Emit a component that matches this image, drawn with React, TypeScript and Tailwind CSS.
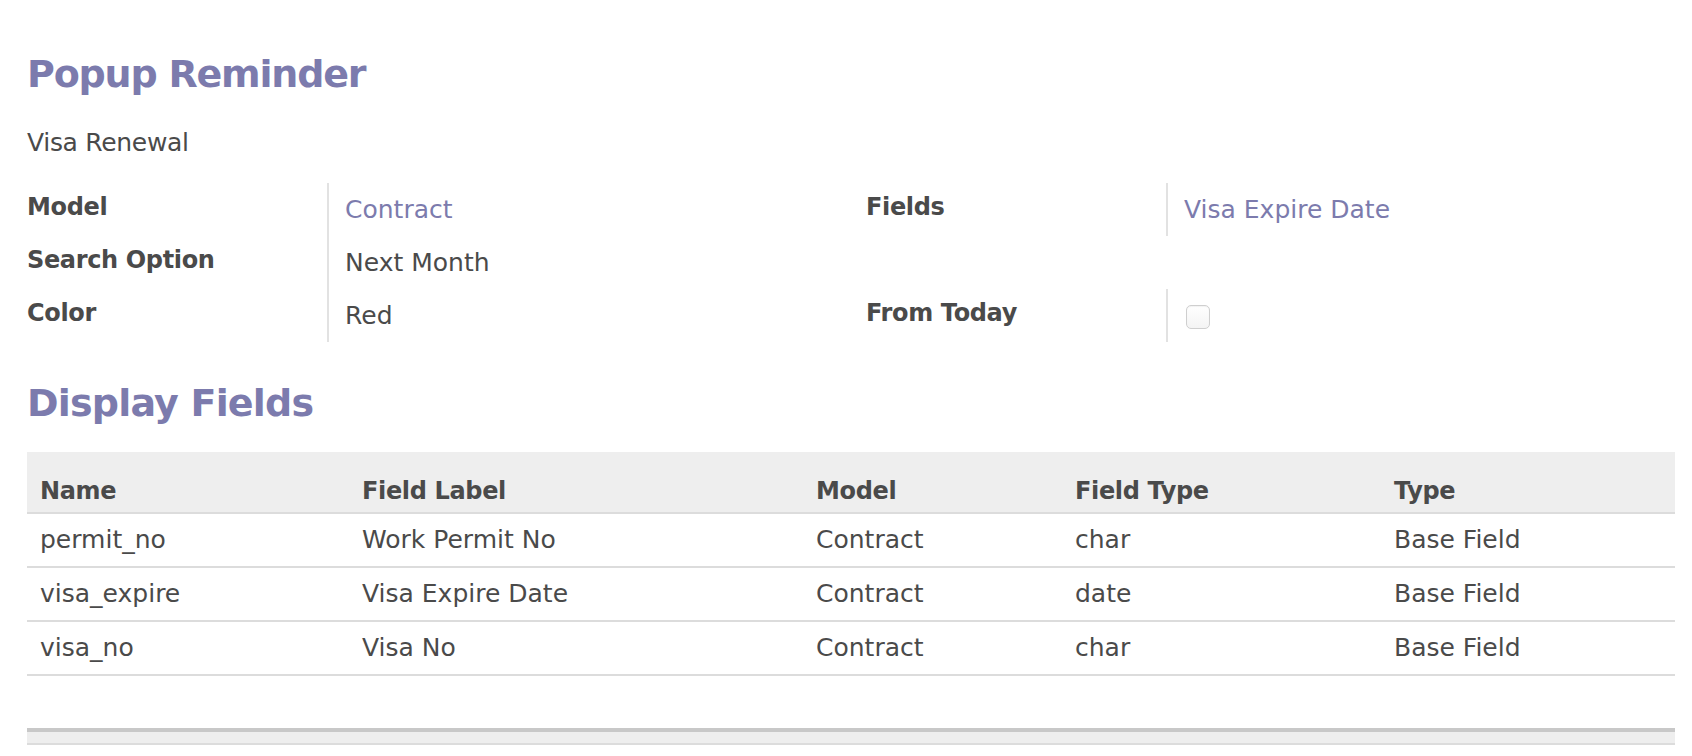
import React from "react";

const purple = "text-[#7c7bad]";

function FormRow({
  label,
  value,
  link,
  divider = true,
  checkbox,
}: {
  label?: string;
  value?: string;
  link?: boolean;
  divider?: boolean;
  checkbox?: boolean;
}) {
  return (
    <div className="flex h-[53px]">
      <div
        className={
          "box-border w-[302px] shrink-0 pt-[10px] text-[24px] font-bold leading-[28px] tracking-[-0.35px] " +
          (divider ? "border-r-2 border-[#e2e2e2]" : "")
        }
      >
        {label}
      </div>
      <div className="pl-[16px] pt-[13px] text-[25px] leading-[28px]">
        {checkbox ? (
          <div className="mt-[3px] ml-[2px] h-[24px] w-[24px] rounded-[5px] border border-[#cfcfcf] bg-gradient-to-b from-white to-[#f4f4f4] shadow-[inset_0_1px_1px_rgba(0,0,0,0.05)]" />
        ) : (
          <span className={link ? purple : ""}>{value}</span>
        )}
      </div>
    </div>
  );
}

const rows = [
  ["permit_no", "Work Permit No", "Contract", "char", "Base Field"],
  ["visa_expire", "Visa Expire Date", "Contract", "date", "Base Field"],
  ["visa_no", "Visa No", "Contract", "char", "Base Field"],
];

const headers = ["Name", "Field Label", "Model", "Field Type", "Type"];

export default function App() {
  return (
    <div className="min-h-screen bg-white pl-[27px] pr-[17px] pt-[52px] font-['DejaVu_Sans','Liberation_Sans',sans-serif] text-[#4a4a4a]">
      <h1 className={"text-[38px] font-bold leading-[44px] tracking-[-1.2px] " + purple}>
        Popup Reminder
      </h1>
      <div className="mt-[33px] text-[25px] leading-[28px] tracking-[-0.3px]">Visa Renewal</div>

      <div className="mt-[26px] flex">
        <div className="w-[839px] shrink-0">
          <FormRow label="Model" value="Contract" link />
          <FormRow label="Search Option" value="Next Month" />
          <FormRow label="Color" value="Red" />
        </div>
        <div className="flex-1">
          <FormRow label="Fields" value="Visa Expire Date" link />
          <div className="h-[53px]" />
          <FormRow label="From Today" checkbox />
        </div>
      </div>

      <h2 className={"mt-[39px] text-[38px] font-bold leading-[44px] tracking-[-0.8px] " + purple}>
        Display Fields
      </h2>

      <div className="mt-[27px]">
        <div className="grid h-[62px] grid-cols-[322px_454px_259px_319px_1fr] border-b-2 border-[#dcdcdc] bg-[#eeeeee]">
          {headers.map((h) => (
            <div
              key={h}
              className="pl-[13px] pt-[25px] text-[24px] font-bold leading-[28px] tracking-[-0.35px]"
            >
              {h}
            </div>
          ))}
        </div>
        {rows.map((r, i) => (
          <div
            key={i}
            className="grid h-[54px] grid-cols-[322px_454px_259px_319px_1fr] border-b-2 border-[#dcdcdc]"
          >
            {r.map((c, j) => (
              <div key={j} className="pl-[13px] pt-[12px] text-[25px] leading-[28px]">
                {c}
              </div>
            ))}
          </div>
        ))}
        <div className="h-[52px]" />
        <div className="h-[17px] border-t-4 border-b-2 border-t-[#c8c8c8] border-b-[#dcdcdc] bg-[#eeeeee]" />
      </div>
    </div>
  );
}
